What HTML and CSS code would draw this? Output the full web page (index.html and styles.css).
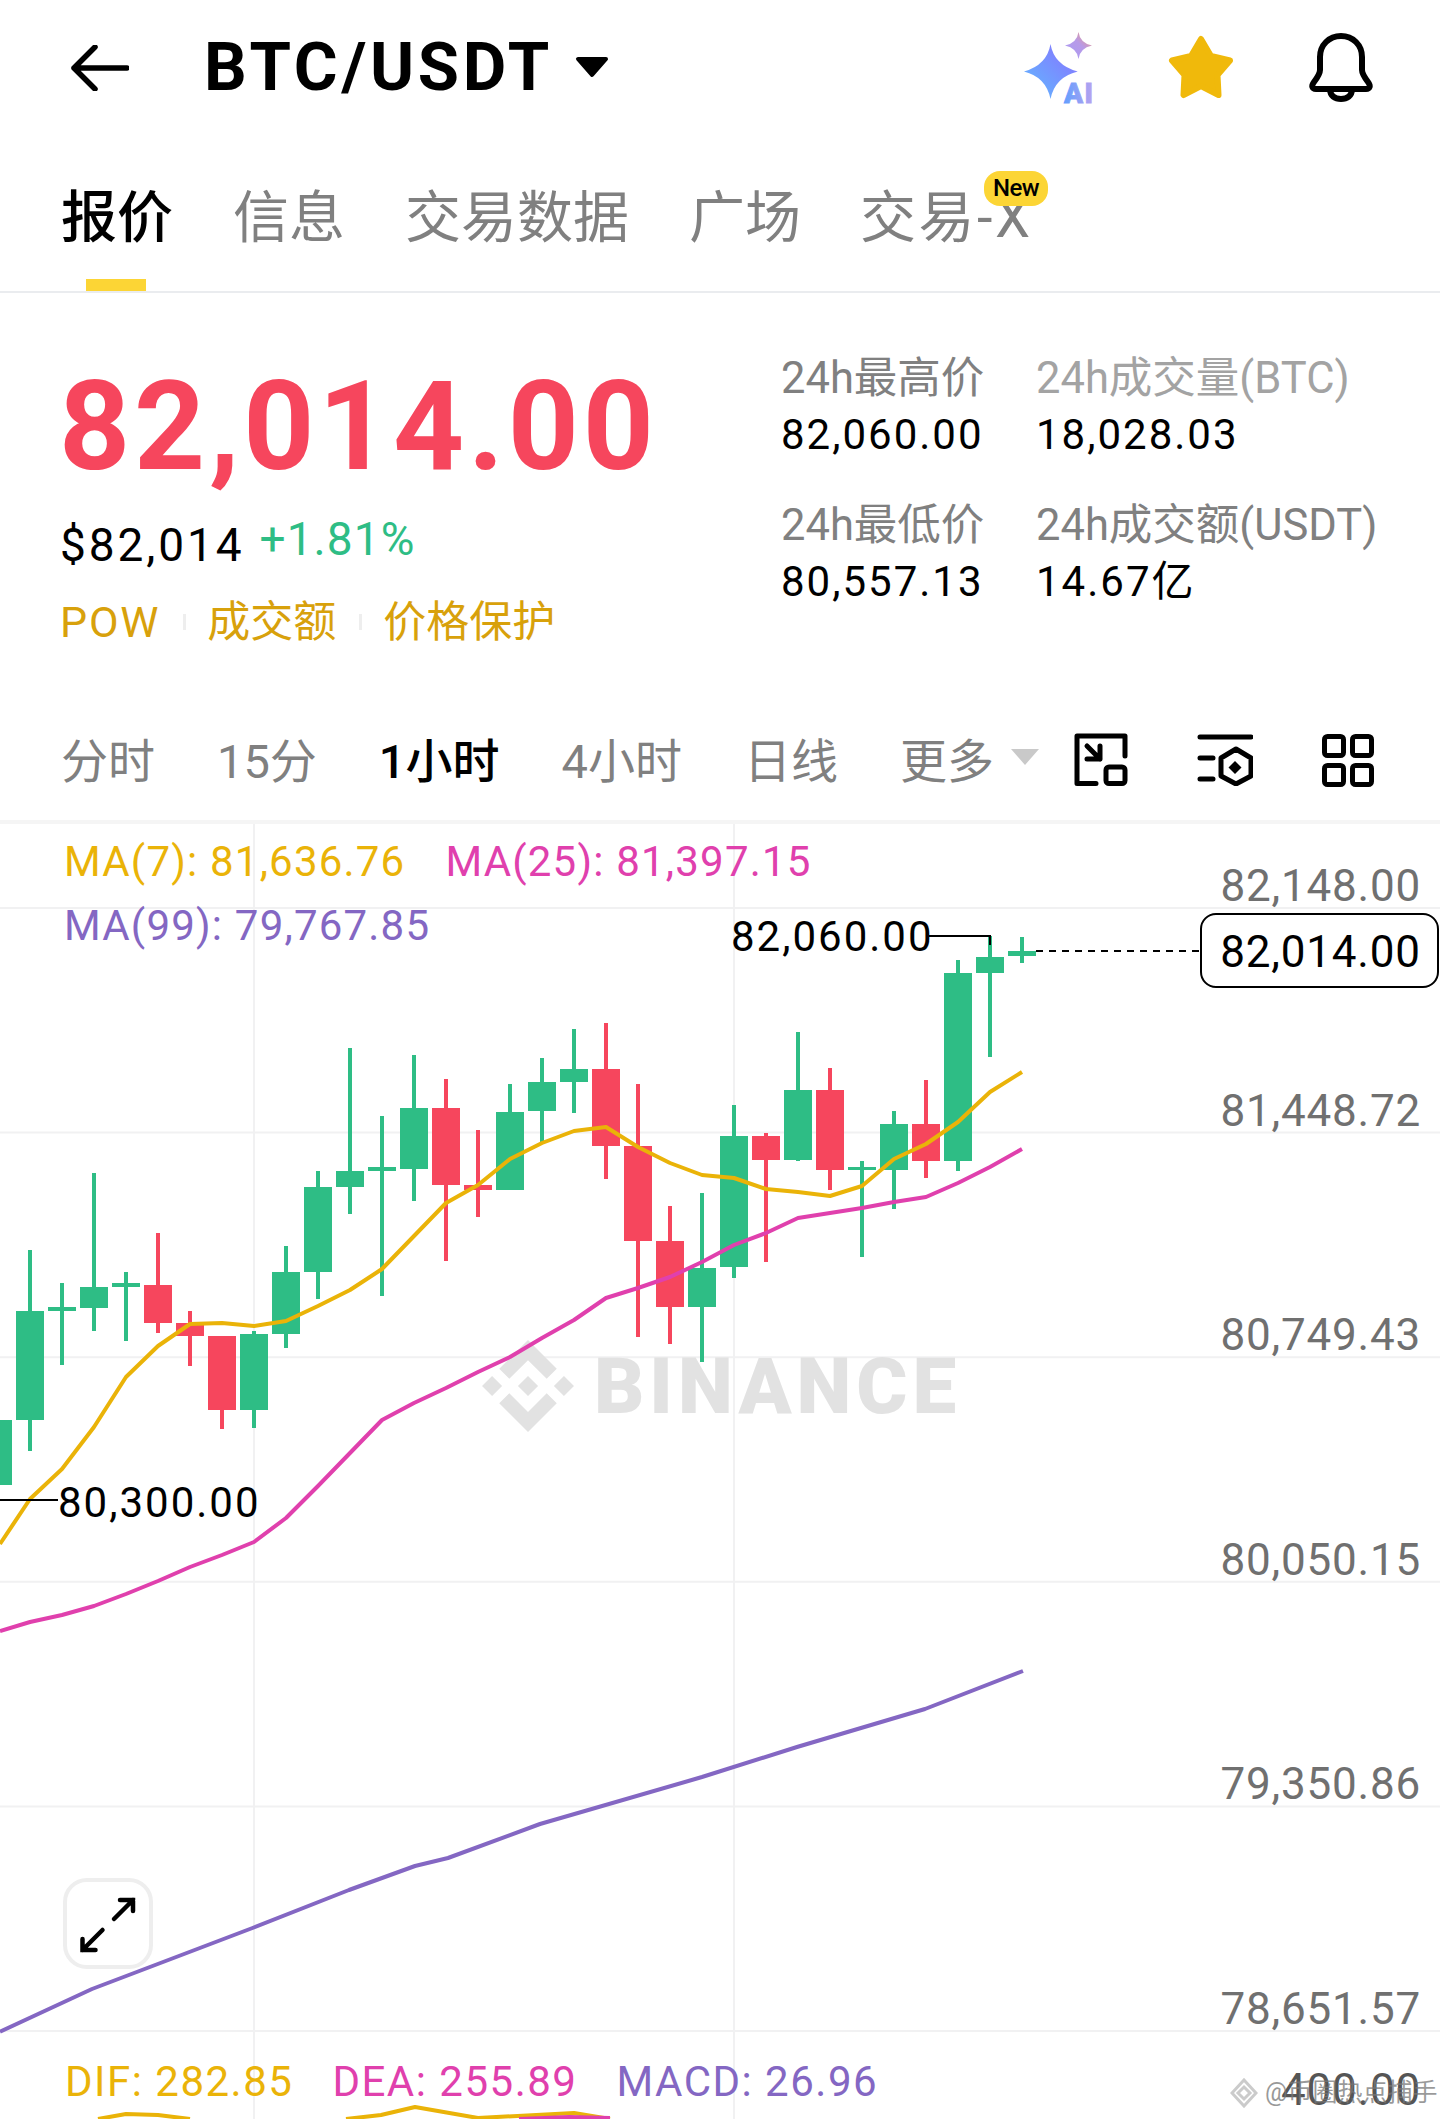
FILE: index.html
```html
<!DOCTYPE html>
<html lang="zh-CN">
<head>
    <meta charset="UTF-8">
    <meta name="viewport" content="width=device-width, initial-scale=1.0">
    <title>BTC/USDT</title>
    <link rel="stylesheet" href="styles.css">
</head>
<body>
    <header class="topbar">
        <svg class="back" viewBox="0 0 58 46"><path d="M56 23H3M24 2L3 23L24 44"/></svg>
        <h1>BTC/USDT</h1>
        <svg class="title-caret" viewBox="0 0 34 22"><path d="M3 3H31L17 19Z"/></svg>
        <div class="top-icons">
            <svg class="ai" viewBox="0 0 73 71">
                <defs>
                    <linearGradient id="aiBig" x1="0" y1="1" x2="1" y2="0"><stop offset="0" stop-color="#5fbcff"/><stop offset="1" stop-color="#8a6fff"/></linearGradient>
                    <linearGradient id="aiSmall" x1="0" y1="1" x2="1" y2="0"><stop offset="0" stop-color="#a99cf5"/><stop offset="0.55" stop-color="#b79ae8"/><stop offset="1" stop-color="#f79a70"/></linearGradient>
                    <linearGradient id="aiText" x1="0" y1="0" x2="1" y2="0"><stop offset="0" stop-color="#5f9fff"/><stop offset="1" stop-color="#bda2ee"/></linearGradient>
                </defs>
                <path fill="url(#aiBig)" d="M26.5 12Q30 33 53.7 39.5Q31 45 26.5 67Q22 45 0 39.5Q23 33 26.5 12Z"/>
                <path fill="url(#aiSmall)" d="M54.5 0Q56 11 68 13.5Q56 16 54.5 27Q53 16 41 13.5Q53 11 54.5 0Z"/>
                <text class="ai-text" x="40" y="70.5" fill="url(#aiText)" stroke="url(#aiText)">AI</text>
            </svg>
            <svg class="star" viewBox="0 0 68 65"><path d="M34 4L44 21L63 25.5L50.5 40L51.5 60L34 51L16.5 60L17.5 40L5 25.5L24 21Z"/></svg>
            <svg class="bell" viewBox="0 0 66 70"><path d="M33 3C21 3 12 12 12 24V37C12 41 9 45 6 49C3 53 4 56 8 56H58C62 56 63 53 60 49C57 45 54 41 54 37V24C54 12 45 3 33 3Z"/><path d="M22 56C22 63 27 66 33 66C39 66 44 63 44 56"/></svg>
        </div>
    </header>

    <nav class="tabs">
        <a class="tab active">报价</a>
        <a class="tab">信息</a>
        <a class="tab">交易数据</a>
        <a class="tab">广场</a>
        <a class="tab tab-x">交易-X<span class="badge">New</span></a>
    </nav>

    <section class="summary">
        <div class="price-box">
            <div class="last-price">82,014.00</div>
            <div class="sub-price"><span class="usd">$82,014</span><span class="change">+1.81%</span></div>
            <div class="tags"><span class="pow">POW</span><i></i><span>成交额</span><i></i><span>价格保护</span></div>
        </div>
        <div class="stats">
            <div class="stat"><span class="label">24h最高价</span><span class="value">82,060.00</span></div>
            <div class="stat"><span class="label faded">24h成交量(BTC)</span><span class="value">18,028.03</span></div>
            <div class="stat"><span class="label">24h最低价</span><span class="value">80,557.13</span></div>
            <div class="stat"><span class="label">24h成交额(USDT)</span><span class="value">14.67亿</span></div>
        </div>
    </section>

    <div class="intervals">
        <a>分时</a>
        <a>15分</a>
        <a class="active">1小时</a>
        <a>4小时</a>
        <a>日线</a>
        <a>更多<svg class="more-caret" viewBox="0 0 30 18"><path d="M1 1H29L15 17Z"/></svg></a>
        <div class="tools">
            <svg class="tool-a" viewBox="0 0 54 54"><path d="M22 50.5H3V3H51V23"/><rect x="32" y="34" width="19" height="16.500" rx="3"/><path d="M13 13L26 26M26 13V26H13"/></svg>
            <svg class="tool-b" viewBox="0 0 56 52"><path d="M3 3H54M3 24H16M3 45H16"/><path d="M39 15L54 24V42L39 50L24 42V24Z"/><path class="solid" d="M38 27L44.500 33.500L38 40L31.500 33.500Z"/></svg>
            <svg class="tool-c" viewBox="0 0 52 53"><rect x="2.500" y="2.500" width="19" height="19" rx="3"/><rect x="30.500" y="2.500" width="19" height="19" rx="3"/><rect x="2.500" y="31.500" width="19" height="19" rx="3"/><rect x="30.500" y="31.500" width="19" height="19" rx="3"/></svg>
        </div>
    </div>

    <main class="chart">
        <svg class="plot" viewBox="0 820 1440 1299">
            <g class="grid">
                <path d="M0 908H1440M0 1132.600H1440M0 1357.200H1440M0 1581.800H1440M0 1806.400H1440M0 2031H1440"/>
                <path d="M254 824V2119M734 824V2119"/>
            </g>

            <g class="watermark">
                <svg x="480" y="1340" width="96" height="92" viewBox="0 0 32 32">
                    <path d="M9.500 13.500L16 7L22.500 13.500L26 10L16 0L6 10ZM9.500 18.500L16 25L22.500 18.500L26 22L16 32L6 22ZM0 16L3.500 12.500L7 16L3.500 19.500ZM12.500 16L16 12.500L19.500 16L16 19.500ZM25 16L28.500 12.500L32 16L28.500 19.500Z"/>
                </svg>
                <text x="594" y="1413">BINANCE</text>
            </g>

            <g class="up">
                <path d="M-4 1309h4v176h-4zM-16 1420h28v65h-28z"/>
                <path d="M28 1250h4v201h-4zM16 1311h28v109H16z"/>
                <path d="M60 1283h4v82h-4zM48 1307h28v4H48z"/>
                <path d="M92 1173h4v158h-4zM80 1287h28v21H80z"/>
                <path d="M124 1272h4v69h-4zM112 1283h28v4h-28z"/>
                <path d="M252 1331h4v97h-4zM240 1334h28v76h-28z"/>
                <path d="M284 1246h4v102h-4zM272 1272h28v62h-28z"/>
                <path d="M316 1171h4v128h-4zM304 1187h28v85h-28z"/>
                <path d="M348 1048h4v166h-4zM336 1171h28v16h-28z"/>
                <path d="M380 1116h4v180h-4zM368 1167h28v4h-28z"/>
                <path d="M412 1055h4v146h-4zM400 1108h28v61h-28z"/>
                <path d="M508 1084h4v106h-4zM496 1112h28v78h-28z"/>
                <path d="M540 1058h4v85h-4zM528 1082h28v29h-28z"/>
                <path d="M572 1029h4v84h-4zM560 1069h28v13h-28z"/>
                <path d="M700 1193h4v169h-4zM688 1268h28v39h-28z"/>
                <path d="M732 1105h4v173h-4zM720 1136h28v131h-28z"/>
                <path d="M796 1032h4v129h-4zM784 1090h28v70h-28z"/>
                <path d="M860 1161h4v96h-4zM848 1167h28v3h-28z"/>
                <path d="M892 1111h4v98h-4zM880 1124h28v46h-28z"/>
                <path d="M956 960h4v211h-4zM944 973h28v188h-28z"/>
                <path d="M988 936h4v121h-4zM976 957h28v16h-28z"/>
                <path d="M1020 937h4v26h-4zM1008 951h28v5h-28z"/>
            </g>
            <g class="down">
                <path d="M156 1233h4v100h-4zM144 1285h28v38h-28z"/>
                <path d="M188 1311h4v55h-4zM176 1323h28v13h-28z"/>
                <path d="M220 1336h4v93h-4zM208 1336h28v74h-28z"/>
                <path d="M444 1079h4v182h-4zM432 1108h28v77h-28z"/>
                <path d="M476 1130h4v87h-4zM464 1185h28v5h-28z"/>
                <path d="M604 1023h4v156h-4zM592 1069h28v77h-28z"/>
                <path d="M636 1084h4v253h-4zM624 1146h28v95h-28z"/>
                <path d="M668 1206h4v138h-4zM656 1241h28v66h-28z"/>
                <path d="M764 1133h4v129h-4zM752 1136h28v24h-28z"/>
                <path d="M828 1068h4v122h-4zM816 1090h28v80h-28z"/>
                <path d="M924 1080h4v98h-4zM912 1124h28v37h-28z"/>
            </g>

            <polyline class="ma99" points="0,2031.700 92,1989 252.500,1928 349,1890 415,1866 448,1858 540,1824 702,1777 797,1747 925,1709 1023,1671"/>
            <polyline class="ma25" points="0,1631 30,1622 62,1615 94,1606 126,1594 158,1581 190,1567 222,1555 254,1542 286,1518 318,1486 350,1453 382,1420 414,1403 446,1388 478,1372 510,1357 542,1338 574,1320 606,1298 638,1288 670,1277 702,1262 734,1245 766,1233 798,1218 830,1213 862,1208 894,1202 926,1197 958,1183 990,1167 1022,1149"/>
            <polyline class="ma7" points="0,1544 30,1499 62,1469 94,1427 126,1377 158,1346 190,1324 222,1323 254,1326 286,1321 318,1306 350,1290 382,1269 414,1236 446,1203 478,1185 510,1159 542,1143 574,1131 606,1127 638,1147 670,1163 702,1175 734,1178 766,1189 798,1192 830,1196 862,1186 894,1159 926,1144 958,1122 990,1092 1022,1072"/>

            <polyline class="macd-dif" points="98,2119 126,2114 158,2115 190,2119"/>
            <polyline class="macd-dif" points="346,2119 381,2115 415,2107 478,2118 574,2113 610,2119"/>
            <polyline class="macd-dea" points="519,2119 569,2117 610,2118"/>

            <path class="leader" d="M929 936H990V945M0 1500H58"/>
            <path class="last-line" d="M1036 951H1200"/>
        </svg>

        <div class="legend">
            <div class="legend-row"><span class="c-gold">MA(7): 81,636.76</span><span class="c-pink">MA(25): 81,397.15</span></div>
            <div class="legend-row"><span class="c-purple">MA(99): 79,767.85</span></div>
        </div>

        <div class="axis">
            <span>82,148.00</span>
            <span>81,448.72</span>
            <span>80,749.43</span>
            <span>80,050.15</span>
            <span>79,350.86</span>
            <span>78,651.57</span>
        </div>

        <div class="mark mark-high">82,060.00</div>
        <div class="mark mark-low">80,300.00</div>
        <div class="last-tag">82,014.00</div>

        <button class="expand">
            <svg viewBox="0 0 60 60"><path d="M36 25L55 6M42 6H55V17M24.500 36L4.500 56M4.500 45V56H17.500"/></svg>
        </button>

        <div class="macd-legend"><span class="c-gold">DIF: 282.85</span><span class="c-pink">DEA: 255.89</span><span class="c-purple">MACD: 26.96</span></div>
        <div class="macd-axis">400.00</div>

        <div class="credit">
            <svg viewBox="0 0 28 30"><path d="M14 2L26 15L14 28L2 15ZM14 9L20 15L14 21L8 15Z"/></svg>
            <span>@币圈热点捕手</span>
        </div>
    </main>
</body>
</html>
```

FILE: styles.css
```css
* { box-sizing: border-box; }
html, body { margin: 0; padding: 0; }
body { width: 1440px; height: 2119px; overflow: hidden; background: #fff; color: #000; font-family: Roboto, "Noto Sans CJK SC", sans-serif; }

/* top bar */
.topbar { display: flex; align-items: center; height: 135px; padding: 0 66px 0 71px; }
.back { width: 58px; height: 46px; fill: none; stroke: #000; stroke-width: 5.500; stroke-linecap: round; stroke-linejoin: round; }
.topbar h1 { margin: 0 0 0 75px; font-size: 67px; font-weight: 700; line-height: 1; letter-spacing: 3.700px; }
.title-caret { width: 34px; height: 22px; margin-left: 22px; margin-top: -2px; fill: #000; stroke: #000; stroke-width: 4; stroke-linejoin: round; }
.top-icons { display: flex; align-items: center; margin-left: auto; }
.ai { width: 73px; height: 71px; overflow: visible; }
.ai-text { font-size: 28px; font-weight: 900; letter-spacing: 1.500px; stroke-width: 0.800; }
.star { width: 68px; height: 65px; margin-left: 70px; fill: #f0b90b; stroke: #f0b90b; stroke-width: 6; stroke-linejoin: round; }
.bell { width: 66px; height: 70px; margin-left: 73px; fill: none; stroke: #000; stroke-width: 6; stroke-linejoin: round; }

/* tabs */
.tabs { display: flex; gap: 60px; height: 158px; padding-left: 61px; border-bottom: 2px solid #eaecef; }
.tab { position: relative; height: 156px; padding-top: 55px; font-size: 56px; line-height: 56px; color: #808080; }
.tab.active { color: #000; font-weight: 500; }
.tab.active::after { content: ""; position: absolute; left: 25px; bottom: 0; width: 60px; height: 12px; background: #fcd535; }
.tab-x { letter-spacing: 2.500px; margin-left: -1px; }
.badge { position: absolute; left: 124px; top: 36px; width: 64px; height: 35px; border-radius: 16px; background: #fcd535; color: #000; font-size: 24px; font-weight: 500; line-height: 35px; text-align: center; letter-spacing: -0.5px; }

/* price summary */
.summary { display: flex; height: 407px; }
.price-box { width: 720px; padding: 72px 0 0 62px; }
.last-price { margin-left: -3px; font-size: 124px; font-weight: 700; line-height: 124px; color: #f6465d; letter-spacing: 3.800px; }
.sub-price { display: flex; gap: 15px; margin-top: 31px; font-size: 46px; line-height: 50px; }
.usd { margin-left: -2px; letter-spacing: 2.900px; }
.change { color: #2ebd85; margin-top: -6px; letter-spacing: 1.100px; }
.tags { display: flex; align-items: center; margin-top: 27px; font-size: 43px; line-height: 50px; color: #d8a10b; }
.pow { margin-left: -2px; letter-spacing: 1.800px; }
.tags i { width: 3px; height: 16px; margin: 0 21px 0 23px; background: #eeeeee; }
.stats { display: grid; grid-template-columns: 255px 1fr; padding: 55px 0 0 61px; grid-auto-rows: 147px; }
.stat { display: flex; flex-direction: column; }
.label { margin: 2px 0 -2px; font-size: 43.500px; line-height: 58px; color: #808080; white-space: nowrap; }
.label.faded { color: #a3a3a3; }
.value { font-size: 42px; line-height: 58px; letter-spacing: 2px; }

/* interval row */
.intervals { display: flex; align-items: center; gap: 62px; height: 120px; padding: 0 66px 0 61px; font-size: 47px; color: #808080; }
.intervals a { display: flex; align-items: center; margin-top: -6px; white-space: nowrap; }
.intervals a.active { color: #000; font-weight: 500; }
.more-caret { width: 30px; height: 18px; margin-left: 16px; fill: #c9c9c9; }
.tools { display: flex; align-items: center; gap: 69px; margin-left: -28px; }
.tools svg { fill: none; stroke: #000; stroke-width: 5; stroke-linecap: round; stroke-linejoin: round; }
.tools .solid { fill: #000; stroke: none; }
.tool-a { width: 54px; height: 54px; }
.tool-b { width: 56px; height: 52px; }
.tool-c { width: 52px; height: 53px; }

/* chart */
.chart { position: relative; height: 1299px; border-top: 4px solid #f5f5f5; overflow: hidden; }
.plot { position: absolute; left: 0; top: -4px; width: 1440px; height: 1299px; }
.grid path { fill: none; stroke: #f1f1f2; stroke-width: 2; }
.watermark { fill: #e2e2e2; }
.watermark text { font-size: 78px; font-weight: 900; letter-spacing: 5px; }
.up { fill: #2ebd85; }
.down { fill: #f6465d; }
.ma7, .ma25, .ma99, .macd-dif, .macd-dea { fill: none; stroke-width: 4; stroke-linejoin: round; }
.ma7, .macd-dif { stroke: #eab308; }
.ma25, .macd-dea { stroke: #e040ad; }
.ma99 { stroke: #8467c3; }
.leader { fill: none; stroke: #000; stroke-width: 2; }
.last-line { fill: none; stroke: #000; stroke-width: 2; stroke-dasharray: 7 6; }

.legend { position: relative; padding: 6px 0 0 64px; font-size: 42px; line-height: 64px; letter-spacing: 1.200px; }
.legend-row { display: flex; gap: 40px; }
.c-gold { color: #eab308; }
.c-pink { color: #e040ad; }
.c-purple { color: #8467c3; }

.axis { position: absolute; right: 19px; top: 37px; display: flex; flex-direction: column; align-items: flex-end; gap: 174.600px; font-size: 44px; line-height: 50px; letter-spacing: 0.800px; color: #707070; }
.macd-axis { position: absolute; right: 19px; bottom: 4px; font-size: 44px; line-height: 50px; letter-spacing: 0.800px; color: #555; }

.mark { position: absolute; font-size: 42px; line-height: 50px; letter-spacing: 2px; }
.mark-high { left: 731px; top: 88px; }
.mark-low { left: 58px; top: 654px; }
.last-tag { position: absolute; left: 1200px; top: 89px; width: 239px; height: 75px; padding: 3px 0 0 2px; border: 2px solid #000; border-radius: 16px; background: #fff; font-size: 44px; line-height: 69px; letter-spacing: 0.800px; text-align: center; }

.expand { position: absolute; left: 63px; top: 1054px; width: 90px; height: 91px; padding: 0; border: 4px solid #eeeeee; border-radius: 24px; background: #fff; }
.expand svg { display: block; width: 60px; height: 60px; margin: auto; fill: none; stroke: #000; stroke-width: 4.500; stroke-linecap: round; stroke-linejoin: miter; }

.macd-legend { position: absolute; left: 65px; top: 1233px; display: flex; gap: 39px; font-size: 42px; line-height: 50px; letter-spacing: 1.500px; }

.credit { position: absolute; left: 1230px; top: 1254px; display: flex; align-items: center; gap: 7px; color: rgba(120, 120, 120, 0.75); font-size: 25px; line-height: 30px; white-space: nowrap; }
.credit svg { width: 28px; height: 30px; fill: none; stroke: rgba(190, 190, 190, 0.8); stroke-width: 3; }
```
